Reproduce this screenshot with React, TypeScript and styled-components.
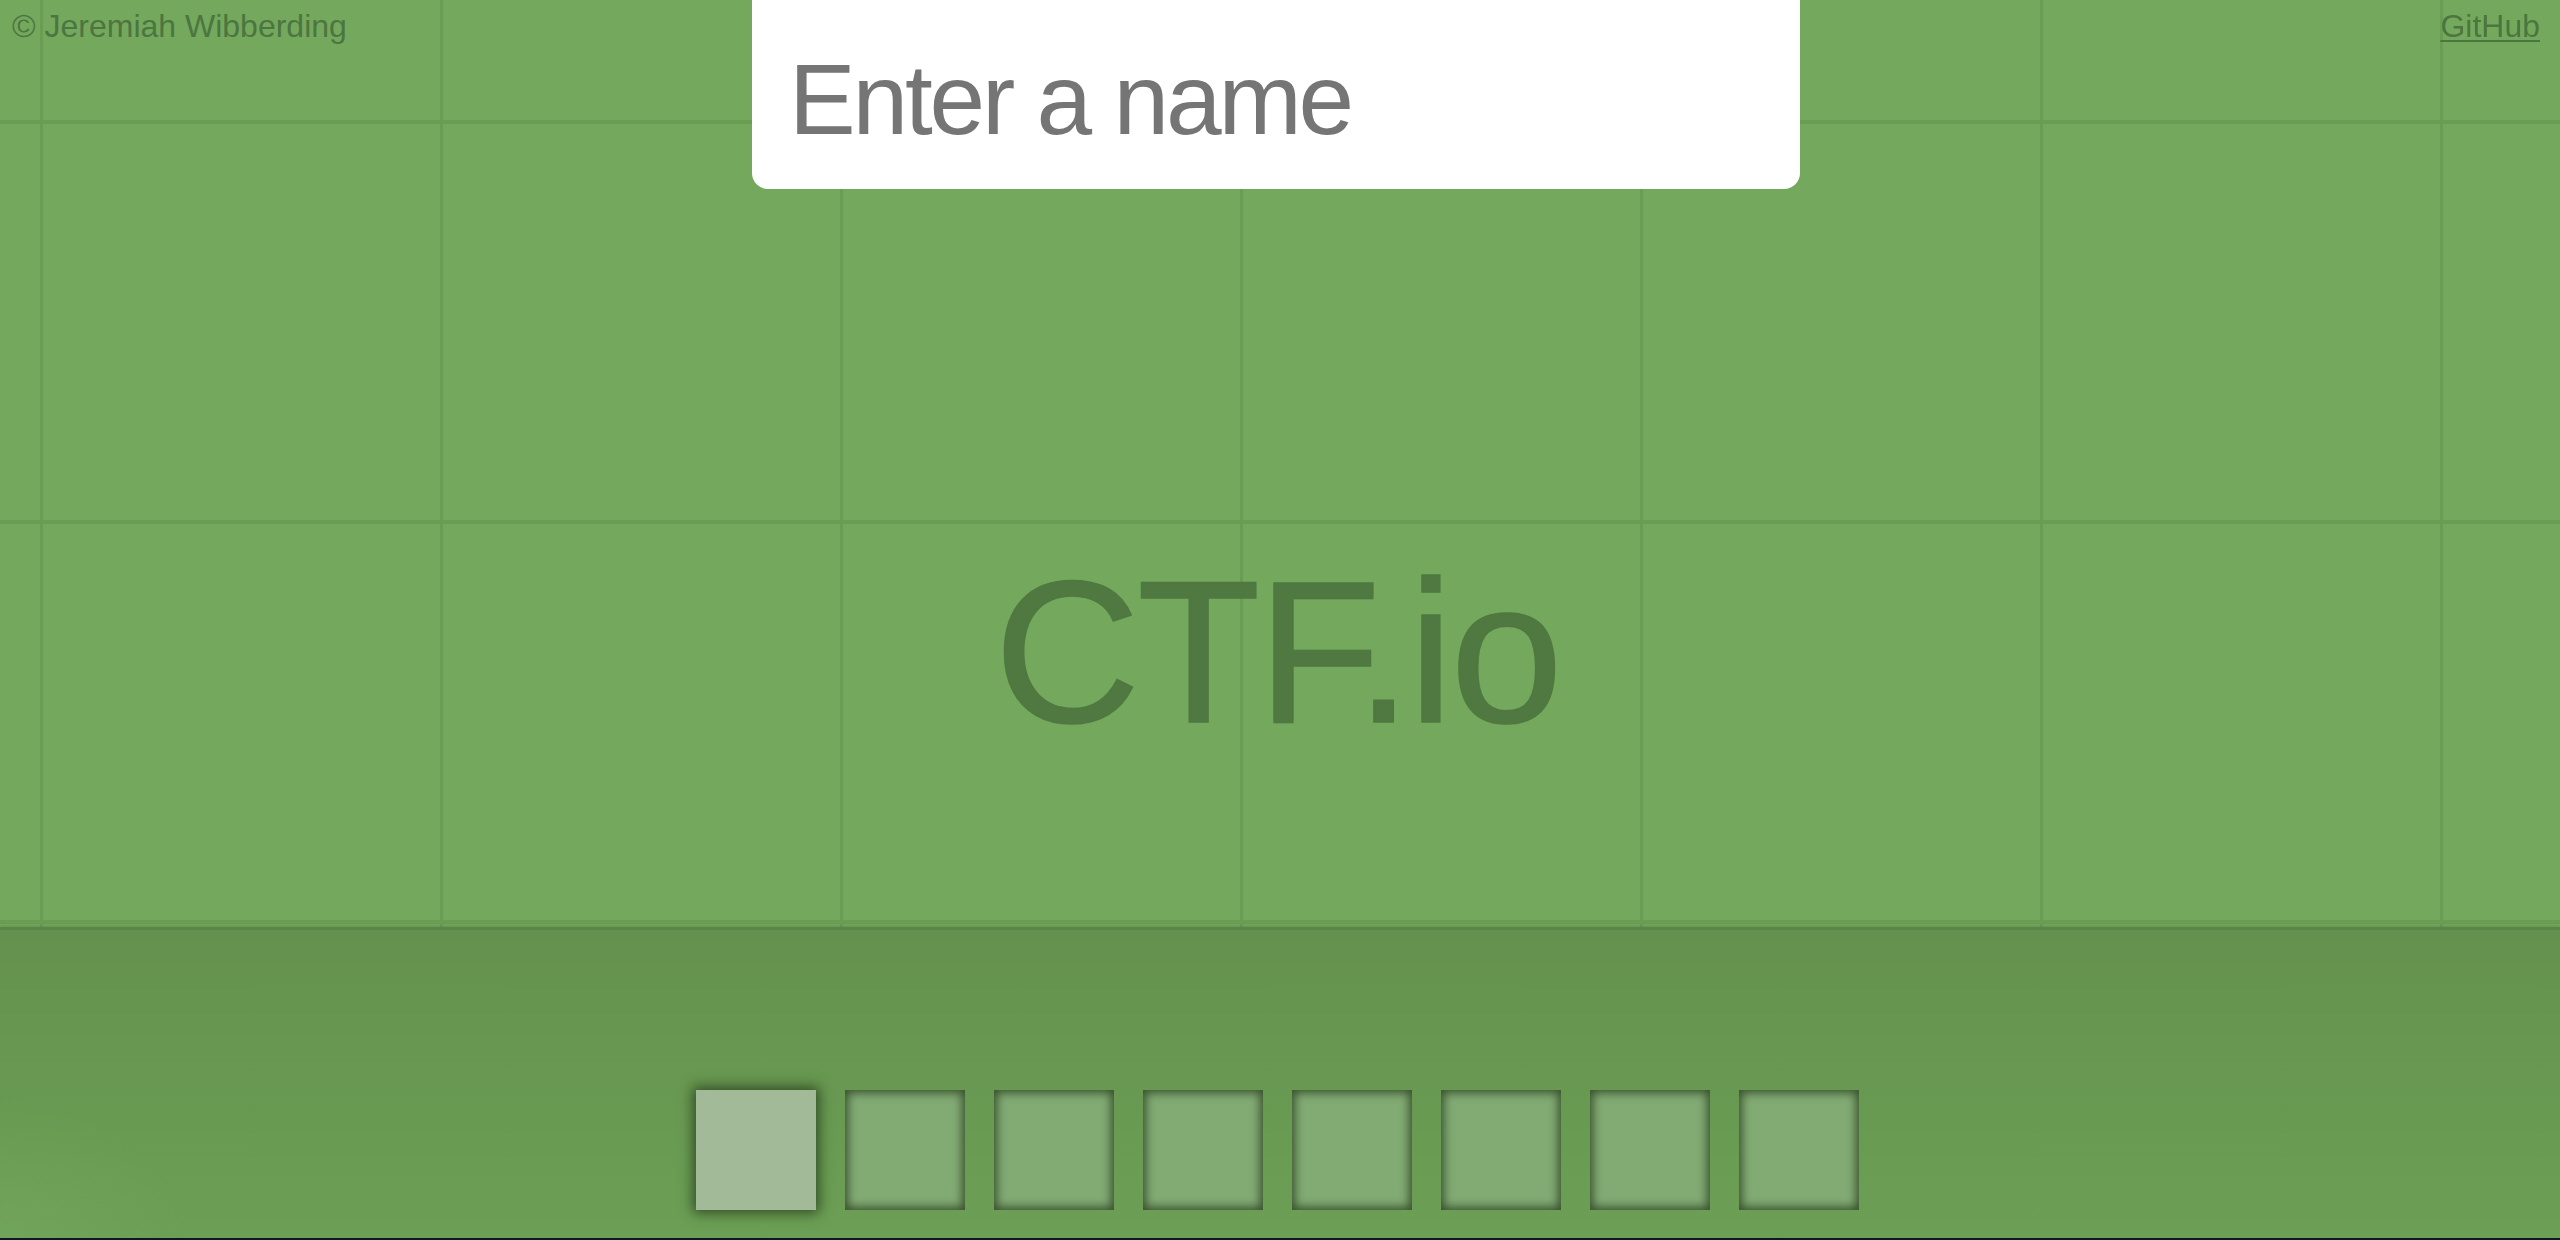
import React from "react";
import styled, { createGlobalStyle } from "styled-components";

const GlobalStyle = createGlobalStyle`
  html, body {
    margin: 0;
    padding: 0;
    background: #0f1724;
    font-family: "Liberation Sans", Arial, Helvetica, sans-serif;
  }
  * { box-sizing: border-box; }
`;

const Page = styled.div`
  display: flex;
  flex-direction: column;
  width: 100%;
  height: 1238px;
  overflow: hidden;
`;

const Stage = styled.main`
  display: flex;
  flex-direction: column;
  height: 927px;
  background-color: #74a85d;
  background-image:
    linear-gradient(to right, #699d54 0, #699d54 3px, transparent 3px),
    linear-gradient(to bottom, #699d54 0, #699d54 4px, transparent 4px);
  background-size: 400px 400px, 400px 400px;
  background-position: 40px 0, 0 120px;
`;

const TopBar = styled.header`
  display: grid;
  grid-template-columns: 1fr auto 1fr;
  align-items: start;
  padding: 0 20px 0 12px;
`;

const Credit = styled.span`
  justify-self: start;
  padding-top: 8px;
  font-size: 32px;
  color: #4d7540;
`;

const RepoLink = styled.a`
  justify-self: end;
  padding-top: 8px;
  font-size: 32px;
  color: #4d7540;
  text-decoration: underline;
  text-underline-offset: 3px;
  text-decoration-thickness: 2px;
`;

const NameInput = styled.input`
  display: block;
  width: 1048px;
  height: 189px;
  padding: 10px 37px 0;
  border: none;
  outline: none;
  border-radius: 0 0 16px 16px;
  background: #ffffff;
  font-family: "Liberation Sans", Arial, Helvetica, sans-serif;
  font-size: 100px;
  letter-spacing: -3.2px;
  color: #222;
  caret-color: #000;

  &::placeholder {
    color: #757575;
    opacity: 1;
  }
`;

const Hero = styled.div`
  display: flex;
  justify-content: center;
  padding: 362px 6px 0 0;
`;

const Title = styled.h1`
  margin: 0;
  font-size: 202px;
  line-height: 1;
  font-weight: 400;
  letter-spacing: -3px;
  color: #4f7940;
  -webkit-text-stroke: 1.5px #4f7940;
  text-shadow: 0 0 1px rgba(40, 70, 30, 0.4);
`;

const Dock = styled.footer`
  flex: 1;
  display: flex;
  flex-direction: column;
  justify-content: flex-end;
  padding: 0 6px 28px 0;
  border-top: 3px solid #5a8648;
  box-shadow: 0 -1px 3px rgba(0, 0, 0, 0.14);
  background:
    radial-gradient(ellipse 260px 200px at 0% 100%, rgba(130, 180, 110, 0.25), transparent 70%),
    linear-gradient(to bottom, #64924e, #6c9f55);
`;

const SlotRow = styled.div`
  display: flex;
  justify-content: center;
  gap: 29px;
`;

const Slot = styled.div<{ $active?: boolean }>`
  width: 120px;
  height: 120px;
  background: ${(p) => (p.$active ? "#a2ba98" : "#82ab74")};
  box-shadow: ${(p) =>
    p.$active
      ? "0 0 12px 3px rgba(30, 50, 20, 0.75)"
      : "inset 0 0 10px 3px rgba(40, 60, 30, 0.8)"};
`;

const slots = Array.from({ length: 8 }, (_, i) => i);

export default function App() {
  return (
    <>
      <GlobalStyle />
      <Page>
        <Stage>
          <TopBar>
            <Credit>© Jeremiah Wibberding</Credit>
            <NameInput type="text" placeholder="Enter a name" autoFocus />
            <RepoLink href="#">GitHub</RepoLink>
          </TopBar>
          <Hero>
            <Title>CTF.io</Title>
          </Hero>
        </Stage>
        <Dock>
          <SlotRow>
            {slots.map((i) => (
              <Slot key={i} $active={i === 0} />
            ))}
          </SlotRow>
        </Dock>
      </Page>
    </>
  );
}
